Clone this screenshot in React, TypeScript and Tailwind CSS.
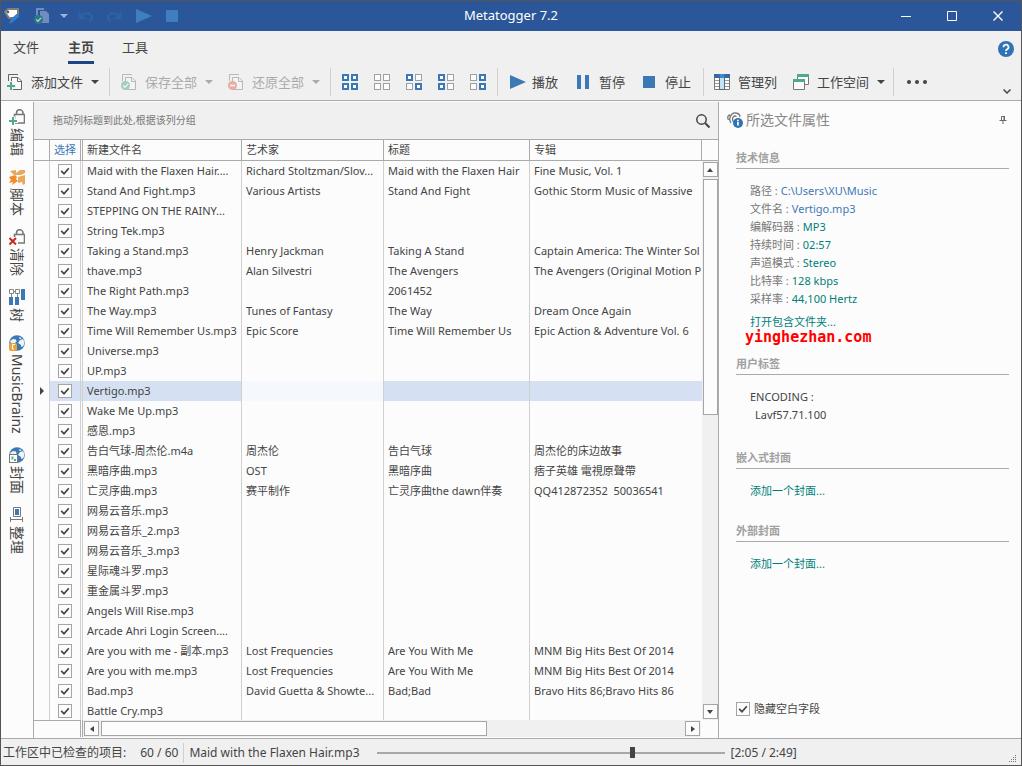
import { useState } from "react";

const TRACKS: [string, string, string, string][] = [
  ["Maid with the Flaxen Hair....", "Richard Stoltzman/Slov...", "Maid with the Flaxen Hair", "Fine Music, Vol. 1"],
  ["Stand And Fight.mp3", "Various Artists", "Stand And Fight", "Gothic Storm Music of Massive"],
  ["STEPPING ON THE RAINY...", "", "", ""],
  ["String Tek.mp3", "", "", ""],
  ["Taking a Stand.mp3", "Henry Jackman", "Taking A Stand", "Captain America: The Winter Sol"],
  ["thave.mp3", "Alan Silvestri", "The Avengers", "The Avengers (Original Motion P"],
  ["The Right Path.mp3", "", "2061452", ""],
  ["The Way.mp3", "Tunes of Fantasy", "The Way", "Dream Once Again"],
  ["Time Will Remember Us.mp3", "Epic Score", "Time Will Remember Us", "Epic Action & Adventure Vol. 6"],
  ["Universe.mp3", "", "", ""],
  ["UP.mp3", "", "", ""],
  ["Vertigo.mp3", "", "", ""],
  ["Wake Me Up.mp3", "", "", ""],
  ["感恩.mp3", "", "", ""],
  ["告白气球-周杰伦.m4a", "周杰伦", "告白气球", "周杰伦的床边故事"],
  ["黑暗序曲.mp3", "OST", "黑暗序曲", "痞子英雄 電視原聲帶"],
  ["亡灵序曲.mp3", "赛平制作", "亡灵序曲the dawn伴奏", "QQ412872352  50036541"],
  ["网易云音乐.mp3", "", "", ""],
  ["网易云音乐_2.mp3", "", "", ""],
  ["网易云音乐_3.mp3", "", "", ""],
  ["星际魂斗罗.mp3", "", "", ""],
  ["重金属斗罗.mp3", "", "", ""],
  ["Angels Will Rise.mp3", "", "", ""],
  ["Arcade Ahri Login Screen....", "", "", ""],
  ["Are you with me - 副本.mp3", "Lost Frequencies", "Are You With Me", "MNM Big Hits Best Of 2014"],
  ["Are you with me.mp3", "Lost Frequencies", "Are You With Me", "MNM Big Hits Best Of 2014"],
  ["Bad.mp3", "David Guetta & Showte...", "Bad;Bad", "Bravo Hits 86;Bravo Hits 86"],
  ["Battle Cry.mp3", "", "", ""],
];

const PROPS: [string, string, boolean][] = [
  ["路径", "C:\\Users\\XU\\Music", true],
  ["文件名", "Vertigo.mp3", true],
  ["编解码器", "MP3", false],
  ["持续时间", "02:57", false],
  ["声道模式", "Stereo", false],
  ["比特率", "128 kbps", false],
  ["采样率", "44,100 Hertz", false],
];

// which of the four squares are filled: tl, tr, bl, br
const GRIDS = [
  { label: "全选", on: [1, 1, 1, 1] },
  { label: "全不选", on: [0, 0, 0, 0] },
  { label: "反选", on: [1, 0, 0, 1] },
  { label: "选择左侧", on: [1, 0, 1, 0] },
  { label: "选择右侧", on: [0, 1, 0, 1] },
];

const CHECK = "appearance-none shrink-0 size-[14px] border border-[#a5a5a5] bg-[#fcfcfc]";

function Check({ label, checked, onChange }: { label: string; checked: boolean; onChange: () => void }) {
  return (
    <span className="grid place-items-center shrink-0">
      <input type="checkbox" aria-label={label} checked={checked} onChange={onChange} className={`${CHECK} col-start-1 row-start-1`} />
      {checked && (
        <svg viewBox="0 0 14 14" className="col-start-1 row-start-1 size-[14px] pointer-events-none">
          <path d="M3.2 6.8 6 9.8 10.8 4.2" fill="none" stroke="#444" strokeWidth="1.7" />
        </svg>
      )}
    </span>
  );
}

function Caret({ className = "text-[#444]" }: { className?: string }) {
  return <svg viewBox="0 0 8 4" className={`w-2 h-1 ${className}`}><path d="M0 0h8L4 4z" fill="currentColor" /></svg>;
}

function Sep({ className = "" }: { className?: string }) {
  return <span className={`w-px h-7 bg-[#d0d0d0] shrink-0 ${className}`} />;
}

function Pages({ badge }: { badge: "add" | "save" | "undo" }) {
  return (
    <svg viewBox="0 0 16 16" className="size-4">
      <path d="M1.5 7V.5H11" fill="none" stroke="#666" />
      <path d="M4.500 3.500H11l3.500 3.500V15.500H4.500z" fill="#fcfcfc" stroke="#666" />
      <path d="M10.500 3.500V7.500H14.500" fill="none" stroke="#666" />
      {badge === "add" && <><path d="M4 7v9M-1 12h10" stroke="#f0f0f0" strokeWidth="4" fill="none" /><path d="M4 8v8M0 12h8" stroke="#4caf87" strokeWidth="2" fill="none" /></>}
      {badge === "save" && <><circle cx="4.500" cy="11.500" r="4.500" fill="#2fa070" /><path d="M2.300 11.500 4 13.300 7 9.800" fill="none" stroke="#fff" strokeWidth="1.300" /></>}
      {badge === "undo" && <><circle cx="4.500" cy="11.500" r="4.500" fill="#dc4a38" /><path d="M2 11.500h5" stroke="#fff" strokeWidth="1.600" /></>}
    </svg>
  );
}

function Squares({ on }: { on: number[] }) {
  return (
    <svg viewBox="0 0 16 16" className="size-4">
      {on.map((v, i) => {
        const x = (i % 2) * 9, y = Math.floor(i / 2) * 9;
        return v
          ? <rect key={i} x={x + 1} y={y + 1} width="5" height="5" fill="#fff" stroke="#3c78b4" strokeWidth="2" />
          : <rect key={i} x={x + 0.5} y={y + 0.5} width="6" height="6" fill="#fcfcfc" stroke="#a0a0a0" />;
      })}
    </svg>
  );
}

function Globe() {
  return (
    <>
      <circle cx="8" cy="8" r="7.800" fill="#3c78b4" />
      <path d="M1 6l3-2 3 .5.500 2.500-2 1H2zM9 8l2-3 3-1 1.500 3-1 4-2 1-1-2.500zM10.500 2l2 1-1 1-1.500-.5z" fill="#eef3f8" />
    </>
  );
}

const SIDE_ICONS: Record<string, React.ReactNode> = {
  edit: <><path d="M5.500 5.500h10V14h-10zM7.500 5.500V4a3 3 0 0 1 6.500 0v1.500" fill="none" stroke="#777" strokeWidth="1.600" /><path d="M4 7.500v9M-1 12h10" stroke="#fcfcfc" strokeWidth="4" /><path d="M4 8v8M0 12h8" stroke="#4caf87" strokeWidth="2" /></>,
  script: <><path d="M1 2l6-1v3l4-3h5v3l-4 2H5zM9 8l7-2v9l-2 1-1-3-4 1z" fill="#e9a95b" /><path d="M0 8l6-2 2 2-1 2 2 2-6 4 1-3-4 1 2-3z" fill="#f28c28" /></>,
  clear: <><path d="M5.500 8V5.500h10V14H9M7.500 5.500V4a3 3 0 0 1 6.500 0v1.500" fill="none" stroke="#777" strokeWidth="1.600" /><path d="M.5 9l6.500 6.500M7 9l-6.500 6.500" stroke="#c8281e" strokeWidth="2" /></>,
  tree: <><path d="M.5.500h4v4h-4zM6.500.500h4v4h-4zM2.500 5v3M8.500 5v3M4.500 2.500h2" fill="none" stroke="#888" /><path d="M12 0h4v11h-4zM0 8h4v8H0zM6 8h4v8H6z" fill="#3c78b4" /></>,
  brainz: <><Globe /><rect x="0" y="8" width="8" height="8" rx="2" fill="#e8a33d" /><path d="M6 9.500H3.500v4.500H5" fill="none" stroke="#fff" /></>,
  cover: <><Globe /><rect x=".5" y="7.500" width="8" height="8" fill="#fff" stroke="#777" /><path d="M2.500 9.500h2v3h-2zM5 12h2v2H5z" fill="#5aaf87" /></>,
  arrange: <><path d="M4.500.500h7v9h-7z" fill="none" stroke="#777" /><path d="M6 2h4v6H6z" fill="#3c78b4" /><path d="M1.500 10v5M1.500 12.500h12M13.500 10v5" fill="none" stroke="#777" /></>,
};

const SIDE = [
  ["edit", "编辑"], ["script", "脚本"], ["clear", "清除"], ["tree", "树"],
  ["brainz", "MusicBrainz"], ["cover", "封面"], ["arrange", "整理"],
];

function Section({ title, children, className = "" }: { title: string; children: React.ReactNode; className?: string }) {
  return (
    <section className={className}>
      <h3 className="font-bold text-[#a0a0a0] leading-4 pb-0.5 border-b border-[#aaa]">{title}</h3>
      <div className="pl-3.5 pt-[13px] leading-[18px]">{children}</div>
    </section>
  );
}

function TitleBar() {
  return (
    <header className="grid grid-cols-[1fr_auto_1fr] items-center h-[31px] shrink-0 bg-[#2b579a] border-t border-[#555] text-white">
      <div className="flex items-center pl-[3px]">
        <svg viewBox="0 0 16 16" className="size-4"><path d="M1 4 4 1h10v7l-3 2H5z" fill="#fff" stroke="#857d70" strokeWidth="2" /><circle cx="4" cy="4" r="1.200" fill="#2b579a" /><path d="M5 16l1-4 7-6 2.500 2.500-7 6z" fill="#2f7fd6" stroke="#2b579a" strokeWidth=".5" /></svg>
        <button aria-label="保存" className="ml-3.5 opacity-70">
          <svg viewBox="0 0 16 16" className="size-4"><path d="M2 0h8v2H4v6H2zM6 3h6l3 3v9H6z" fill="#8fa5cf" /><circle cx="4.500" cy="11.500" r="4.500" fill="#2a8780" /><path d="M2.300 11.500 4 13.300 7 9.800" fill="none" stroke="#fff" strokeWidth="1.300" /></svg>
        </button>
        <button aria-label="更多保存" className="ml-2.5"><Caret className="text-[#9fb3d6]" /></button>
        <button aria-label="撤销" className="ml-2.5"><svg viewBox="0 0 16 16" className="size-4"><path d="M1.500 4v6h6M2 9.500c3-5 11-6 12 0 0 1-1 3-3 4" fill="none" stroke="#2d62a7" strokeWidth="2.200" /></svg></button>
        <button aria-label="重做" className="ml-3"><svg viewBox="0 0 16 16" className="size-4"><path d="M14.500 4v6h-6M14 9.500c-3-5-11-6-12 0 0 1 1 3 3 4" fill="none" stroke="#2d62a7" strokeWidth="2.200" /></svg></button>
        <button aria-label="播放曲目" className="ml-3.5"><svg viewBox="0 0 16 16" className="size-4"><path d="M0 1v14l16-7z" fill="#3f7fbf" /></svg></button>
        <button aria-label="停止曲目" className="ml-3.5"><svg viewBox="0 0 12 12" className="size-3"><path d="M0 0h12v12H0z" fill="#3f7fbf" /></svg></button>
      </div>
      <h1 className="text-[13px]">Metatogger 7.2</h1>
      <div className="flex items-center justify-end gap-9 pr-[18px]">
        <button aria-label="最小化"><svg viewBox="0 0 10 10" className="size-2.5"><path d="M0 5.500h10" stroke="#fff" /></svg></button>
        <button aria-label="最大化"><svg viewBox="0 0 10 10" className="size-2.5"><path d="M.5.500h9v9h-9z" fill="none" stroke="#fff" /></svg></button>
        <button aria-label="关闭"><svg viewBox="0 0 10 10" className="size-2.5"><path d="M.5.500l9 9M9.500.500l-9 9" stroke="#fff" strokeWidth="1.400" /></svg></button>
      </div>
    </header>
  );
}

function Ribbon() {
  return (
    <div className="shrink-0 bg-[#f0f0f0] border-b border-[#aaa] text-[13px] leading-[18px]">
      <nav className="flex items-start h-[33px] pl-3 pr-[7px]">
        <button className="pt-[7px]">文件</button>
        <button className="pt-[7px] pb-[5px] ml-[29px] font-bold border-b-3 border-[#1c4586]">主页</button>
        <button className="pt-[7px] ml-7">工具</button>
        <button aria-label="帮助" className="ml-auto mt-2.5">
          <svg viewBox="0 0 16 16" className="size-4"><circle cx="8" cy="8" r="8" fill="#2e74b5" /><path d="M5.500 6.200a2.500 2.500 0 1 1 3.700 2.100C8.300 8.800 8 9 8 10" fill="none" stroke="#fff" strokeWidth="1.800" /><path d="M7 11.200h2v1.800H7z" fill="#fff" /></svg>
        </button>
      </nav>
      <div className="flex items-center h-9 pl-1.5 pr-2.5">
        <button className="flex items-center gap-2"><Pages badge="add" />添加文件<Caret /></button>
        <Sep className="ml-2.5" />
        <button disabled className="flex items-center gap-2 ml-[11px] text-[#444] opacity-40"><Pages badge="save" />保存全部<Caret /></button>
        <button disabled className="flex items-center gap-2 ml-[15px] text-[#444] opacity-40"><Pages badge="undo" />还原全部<Caret /></button>
        <Sep className="ml-2.5" />
        <div className="flex gap-4 mx-[11px]">
          {GRIDS.map(g => <button key={g.label} aria-label={g.label}><Squares on={g.on} /></button>)}
        </div>
        <Sep />
        <button className="flex items-center gap-1.5 ml-3"><svg viewBox="0 0 16 16" className="size-4"><path d="M0 1v14l16-7z" fill="#3c78b4" /></svg>播放</button>
        <button className="flex items-center gap-2.5 ml-[19px]"><svg viewBox="0 0 12 14" className="w-3 h-3.5"><path d="M0 0h4v14H0zM8 0h4v14H8z" fill="#3c78b4" /></svg>暂停</button>
        <button className="flex items-center gap-2.5 ml-[18px]"><svg viewBox="0 0 12 12" className="size-3"><path d="M0 0h12v12H0z" fill="#3c78b4" /></svg>停止</button>
        <Sep className="ml-3" />
        <button className="flex items-center gap-2 ml-2.5">
          <svg viewBox="0 0 16 16" className="size-4"><path d="M.5.500h15v15H.5z" fill="#fff" stroke="#777" /><path d="M1 6.500h14M1 9.500h14M1 12.500h14" stroke="#999" /><path d="M5.500.500h5v15h-5z" fill="#bfe3f7" stroke="#666" /><path d="M0 0h5v4H0zM11 0h5v4h-5z" fill="#2e68ad" /><path d="M6 0h4v4H6z" fill="#3c8ac8" /></svg>
          管理列
        </button>
        <button className="flex items-center gap-2 ml-4">
          <svg viewBox="0 0 16 16" className="size-4"><path d="M4.500.500h11v10h-11z" fill="#fcfcfc" stroke="#777" /><path d="M.5 5.500h11v10H.5z" fill="#fcfcfc" stroke="#777" /><path d="M4 0h12v3H4zM0 5h12v3H0z" fill="#4fa98a" /></svg>
          工作空间<Caret />
        </button>
        <Sep className="ml-2" />
        <button aria-label="更多" className="ml-[13px]"><svg viewBox="0 0 20 4" className="w-5 h-1" fill="#444"><circle cx="2" cy="2" r="2" /><circle cx="10" cy="2" r="2" /><circle cx="18" cy="2" r="2" /></svg></button>
        <button aria-label="折叠功能区" className="ml-auto mt-[18px]"><svg viewBox="0 0 8 5" className="w-2 h-[5px]"><path d="M.5.500 4 4 7.500.500" fill="none" stroke="#444" strokeWidth="1.500" /></svg></button>
      </div>
    </div>
  );
}

const ARROW = "grid place-items-center size-[15px] shrink-0 border border-[#a5a5a5] bg-[#fcfcfc] text-[#444]";
const TH = "h-[21px] border-b border-[#aaa] font-normal text-left overflow-hidden whitespace-nowrap";
const TD = "h-5 px-1 overflow-hidden whitespace-nowrap";

function TrackTable({ checked, toggle }: { checked: boolean[]; toggle: (i: number) => void }) {
  const selected = 11;
  return (
    <div className="flex flex-col flex-1 min-w-0 border-x border-[#aaa]">
      <div className="flex items-center justify-between h-[37px] pl-[19px] pr-2 bg-[#f0f0f0] text-[10px] text-[#777] shrink-0">
        拖动列标题到此处,根据该列分组
        <button aria-label="搜索"><svg viewBox="0 0 14 14" className="size-3.5"><circle cx="5.500" cy="5.500" r="4.700" fill="none" stroke="#444" strokeWidth="1.500" /><path d="M9 9l4.500 4.500" stroke="#444" strokeWidth="2" /></svg></button>
      </div>
      <div className="flex flex-1 min-h-0 border-t border-[#aaa]">
        <div className="flex-1 min-w-0 overflow-hidden">
          <table className="table-fixed border-separate border-spacing-0 w-full">
            <colgroup>
              <col className="w-4" /><col className="w-[31px]" /><col className="w-[161px]" /><col className="w-[142px]" /><col className="w-[146px]" /><col />
            </colgroup>
            <thead>
              <tr>
                <th className={`${TH} border-r`} aria-label="当前行" />
                <th className={`${TH} px-1 border-r text-[#3c78b4]`}>选择</th>
                <th className={`${TH} p-0 border-r`}><div className="ml-px pl-1 border-l border-[#aaa] leading-5">新建文件名</div></th>
                <th className={`${TH} px-1 border-r`}>艺术家</th>
                <th className={`${TH} px-1 border-r`}>标题</th>
                <th className={`${TH} px-1 border-r`}>专辑</th>
              </tr>
            </thead>
            <tbody>
              {TRACKS.map(([file, artist, title, album], i) => {
                const bg = i === selected ? "bg-[#d5e1f2]" : "";
                return (
                  <tr key={file}>
                    <td className="border-r border-[#d0d0d0] p-0">
                      {i === selected && <svg viewBox="0 0 4 8" className="w-1 h-2 ml-1.5"><path d="M0 0v8l4-4z" fill="#444" /></svg>}
                    </td>
                    <td className={`h-5 pl-2 p-0 border-r border-[#d0d0d0] ${bg}`}>
                      <div className="flex"><Check label={file} checked={checked[i]} onChange={() => toggle(i)} /></div>
                    </td>
                    <td className={`h-5 p-0 whitespace-nowrap border-r border-[#d0d0d0] ${bg}`}>
                      <div className="ml-px pl-1 border-l border-[#d0d0d0] leading-5 overflow-hidden">{file}</div>
                    </td>
                    <td className={`${TD} border-r border-[#d0d0d0] ${i === selected ? "bg-[#f5f8fd]" : ""}`}>{artist}</td>
                    <td className={`${TD} border-r border-[#d0d0d0] ${bg}`}>{title}</td>
                    <td className={`${TD} whitespace-pre ${bg}`}>{album}</td>
                  </tr>
                );
              })}
            </tbody>
          </table>
        </div>
        <div className="flex flex-col w-4 shrink-0">
          <div className="h-[21px] border-b border-[#aaa] shrink-0" />
          <div className="flex flex-col flex-1 items-center gap-0.5 py-px bg-[#f0f0f0]">
            <button aria-label="向上滚动" className={ARROW}><svg viewBox="0 0 6 4" className="w-1.5 h-1"><path d="M0 4h6L3 0z" fill="currentColor" /></svg></button>
            <div className="w-[15px] h-[236px] border border-[#a5a5a5] bg-[#fcfcfc]" />
            <button aria-label="向下滚动" className={`${ARROW} mt-auto`}><svg viewBox="0 0 6 4" className="w-1.5 h-1"><path d="M0 0h6L3 4z" fill="currentColor" /></svg></button>
          </div>
        </div>
      </div>
      <div className="flex h-[17px] shrink-0 mb-px">
        <div className="w-[47px] border-t border-r border-[#aaa]" />
        <div className="w-0.5 border-r border-[#aaa]" />
        <div className="flex flex-1 items-center gap-0.5 px-px bg-[#f0f0f0]">
          <button aria-label="向左滚动" className={ARROW}><svg viewBox="0 0 4 6" className="w-1 h-1.5"><path d="M4 0v6L0 3z" fill="currentColor" /></svg></button>
          <div className="w-[386px] h-[15px] border border-[#a5a5a5] bg-[#fcfcfc]" />
          <button aria-label="向右滚动" className={`${ARROW} ml-auto`}><svg viewBox="0 0 4 6" className="w-1 h-1.5"><path d="M0 0v6l4-3z" fill="currentColor" /></svg></button>
        </div>
        <div className="w-[17px]" />
      </div>
    </div>
  );
}

function Details() {
  const [hideEmpty, setHideEmpty] = useState(true);
  return (
    <aside className="flex flex-col w-[302px] shrink-0 pl-[17px] pr-3 pb-5">
      <div className="flex items-center gap-[3px] -ml-[9px] h-9 text-sm text-[#888]">
        <svg viewBox="0 0 16 16" className="size-4">
          <path d="M1.500 8C0 5 1 3 3 3M4 11C1 7 4 0 9 1c3 .5 4 2 4 4M6.500 10C4 6 7 3 9.500 4.500" fill="none" stroke="#777" strokeWidth="1.300" />
          <circle cx="11" cy="11" r="5" fill="#2e74b5" /><path d="M10 10h1.800v3.500H10zM10 7.800h1.800v1.400H10z" fill="#fff" />
        </svg>
        <h2>所选文件属性</h2>
        <button aria-label="固定" className="ml-auto mr-0.5"><svg viewBox="0 0 8 8" className="size-2"><path d="M2.500.500h3v4h-3zM.5 4.500h7M4 4.500V8" fill="none" stroke="#666" /><path d="M4.500 0H6v5H4.500z" fill="#666" /></svg></button>
      </div>
      <Section title="技术信息" className="mt-3">
        <dl>
          {PROPS.map(([k, v, link]) => (
            <div key={k} className="flex gap-[3px]">
              <dt className="text-[#777]">{k} :</dt>
              <dd className={link ? "text-[#3c78b4]" : "text-[#007f78]"}>{link ? <a href="#file">{v}</a> : v}</dd>
            </div>
          ))}
        </dl>
        <a href="#folder" className="block mt-[5px] text-[#007f78]">打开包含文件夹...</a>
        <p className="-ml-[5px] -mt-[3px] font-['DejaVu_Sans_Mono',monospace] font-bold text-[15px] leading-[18px] text-[#f00]">yinghezhan.com</p>
      </Section>
      <Section title="用户标签" className="mt-2.5">
        <dl><dt>ENCODING :</dt><dd className="pl-[5px]">Lavf57.71.100</dd></dl>
      </Section>
      <Section title="嵌入式封面" className="mt-[26px]">
        <a href="#embedded" className="block text-[#007f78]">添加一个封面...</a>
      </Section>
      <Section title="外部封面" className="mt-[23px]">
        <a href="#external" className="block text-[#007f78]">添加一个封面...</a>
      </Section>
      <label className="flex items-center gap-1 mt-auto leading-[18px]">
        <Check label="隐藏空白字段" checked={hideEmpty} onChange={() => setHideEmpty(!hideEmpty)} />隐藏空白字段
      </label>
    </aside>
  );
}

export default function App() {
  const [checked, setChecked] = useState(TRACKS.map(() => true));
  const [pos, setPos] = useState(125);
  const toggle = (i: number) => setChecked(c => c.map((v, j) => (j === i ? !v : v)));

  return (
    <div className="flex flex-col h-screen overflow-hidden bg-[#fcfcfc] border-x border-b border-[#555] text-[11px] text-[#444] font-['Noto_Sans','Noto_Sans_CJK_SC',sans-serif]">
      <TitleBar />
      <Ribbon />
      <main className="flex flex-1 min-h-0 pt-px">
        <nav className="flex w-8 shrink-0 [writing-mode:vertical-rl] pt-[7px] gap-[13px] text-sm leading-4">
          {SIDE.map(([icon, label]) => (
            <button key={icon} className="flex items-center gap-[3px] [text-orientation:sideways]">
              <svg viewBox="0 0 16 16" className="size-4 shrink-0">{SIDE_ICONS[icon]}</svg>{label}
            </button>
          ))}
        </nav>
        <TrackTable checked={checked} toggle={toggle} />
        <Details />
      </main>
      <footer className="flex items-center h-[27px] shrink-0 pl-0.5 pr-1 pt-0.5 bg-[#f0f0f0] border-t border-[#aaa] text-xs">
        <span>工作区中已检查的项目:</span>
        <span className="ml-3.5">60 / 60</span>
        <span className="w-px h-5 mx-[5px] bg-[#d0d0d0]" />
        <span>Maid with the Flaxen Hair.mp3</span>
        <input type="range" min={0} max={169} value={pos} onChange={e => setPos(Number(e.target.value))} aria-label="播放位置"
          className="appearance-none w-[348px] h-3 ml-[17px] bg-transparent [&::-webkit-slider-runnable-track]:h-0.5 [&::-webkit-slider-runnable-track]:bg-[#a8a8a8] [&::-webkit-slider-thumb]:appearance-none [&::-webkit-slider-thumb]:w-[5px] [&::-webkit-slider-thumb]:h-[11px] [&::-webkit-slider-thumb]:mt-[-5px] [&::-webkit-slider-thumb]:bg-[#444]" />
        <span className="ml-1.5">[2:05 / 2:49]</span>
        <svg viewBox="0 0 8 8" className="size-2 ml-auto self-end mb-0.5" fill="#777"><path d="M6 0h1v1H6zM4 2h1v1H4zM6 2h1v1H6zM2 4h1v1H2zM4 4h1v1H4zM6 4h1v1H6zM0 6h1v1H0zM2 6h1v1H2zM4 6h1v1H4zM6 6h1v1H6z" /></svg>
      </footer>
    </div>
  );
}
